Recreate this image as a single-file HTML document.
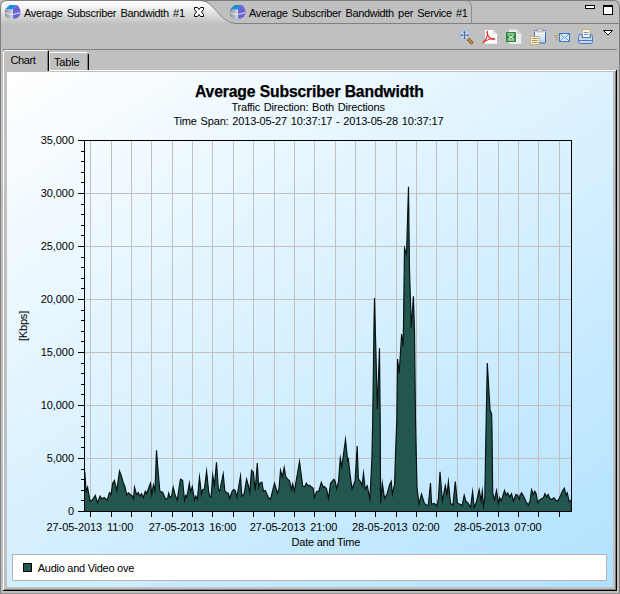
<!DOCTYPE html>
<html><head><meta charset="utf-8"><title>Average Subscriber Bandwidth</title>
<style>
html,body{margin:0;padding:0}
body{width:620px;height:594px;overflow:hidden;background:#c0c0c0;font-family:"Liberation Sans",sans-serif;font-size:11px;color:#000;position:relative}
div{position:absolute;box-sizing:border-box;white-space:nowrap}
.abs{position:absolute;left:0;top:0}
.t{font-size:11px;line-height:14px;height:14px}
.content{left:7px;top:72px;width:606px;height:515px;background:linear-gradient(147deg,#ffffff 0%,#b1e2ff 100%)}
.yl{left:14px;width:60px;text-align:right;letter-spacing:-0.05px}
.xl{top:520px;letter-spacing:-0.06px;word-spacing:1.8px}
.tab{top:5.5px;letter-spacing:-0.33px;word-spacing:1.6px}
</style></head><body>
<!-- outer frame + editor tabs -->
<svg class="abs" width="620" height="594" viewBox="0 0 620 594">
<defs><linearGradient id="tg" x1="0" y1="0" x2="0" y2="1"><stop offset="0" stop-color="#ffffff"/><stop offset="0.25" stop-color="#f4f4f4"/><stop offset="1" stop-color="#c0c0c0"/></linearGradient></defs>
<path d="M1 24V7Q1 1 7 1H199C207 1 210 4 214.5 9C218.5 12.5 225 23 236 23V24Z" fill="url(#tg)"/>
<path d="M0.5 594V7Q0.5 0.5 7 0.5H199C207 0.5 210 4 214.5 9C218.5 12.5 225 23 236 23.5H619" fill="none" stroke="#808080" stroke-width="1"/>
<path d="M199 0.5H613Q619.5 0.5 619.5 7V594" fill="none" stroke="#7c7c7c" stroke-width="1"/>
<path d="M465 0.5Q471.5 1 471.5 7V23" fill="none" stroke="#8c8c8c" stroke-width="1"/>
</svg>
<div class="t tab" style="left:24px">Average Subscriber Bandwidth #1</div>
<div class="t tab" style="left:249px">Average Subscriber Bandwidth per Service #1</div>
<svg class="abs" width="620" height="50" viewBox="0 0 620 50">
<defs>
<linearGradient id="ig1" x1="0" y1="0" x2="1" y2="0"><stop offset="0" stop-color="#8890a0"/><stop offset="1" stop-color="#d8dce0"/></linearGradient>
<linearGradient id="ig2" x1="0" y1="0" x2="0" y2="1"><stop offset="0" stop-color="#ffffff"/><stop offset="1" stop-color="#b8d0f0"/></linearGradient>
</defs>
<!-- tab icons (3D pie) -->
<g>
<path d="M5 9.5L9.5 5H17L13 9.5Z" fill="#1a8cd8"/>
<path d="M5 9.5H13V18.5H8Q5 17 5 15Z" fill="url(#ig1)"/>
<path d="M13 9.5L17 5Q20.5 8 20.5 12.5Q20 17 16 18.5H13Z" fill="#6a62d6"/>
<path d="M5.5 13Q12 16 20 12.5" stroke="#e8e8f4" stroke-width="1" fill="none"/>
</g>
<g transform="translate(225,0)">
<path d="M5 9.5L9.5 5H17L13 9.5Z" fill="#1a8cd8"/>
<path d="M5 9.5H13V18.5H8Q5 17 5 15Z" fill="url(#ig1)"/>
<path d="M13 9.5L17 5Q20.5 8 20.5 12.5Q20 17 16 18.5H13Z" fill="#6a62d6"/>
<path d="M5.5 13Q12 16 20 12.5" stroke="#e8e8f4" stroke-width="1" fill="none"/>
</g>
<!-- close X -->
<path d="M194.5 7.5H197.5L199 9.5L200.500 7.5H203.5V9.5L201.500 12L203.5 14.500V16.500H200.500L199 14.500L197.500 16.500H194.500V14.500L196.500 12L194.500 9.500Z" fill="#fff" stroke="#000" stroke-width="1"/>
<!-- min / max -->
<rect x="585.5" y="5.500" width="9" height="3" fill="#fff" stroke="#000"/>
<rect x="603.500" y="6" width="9" height="8.500" fill="#fff" stroke="#000"/><rect x="603" y="5" width="10" height="2" fill="#000"/>
<!-- dropdown -->
<path d="M603.500 30.500H612.500L608 35Z" fill="#fff" stroke="#000" stroke-width="1"/>
<!-- zoom icon -->
<path d="M468.300 39.300L471.500 42.500" stroke="#8a5420" stroke-width="3.400" stroke-linecap="round"/>
<path d="M468.300 39.300L471.500 42.500" stroke="#c88838" stroke-width="2" stroke-linecap="round"/>
<circle cx="464.500" cy="35.200" r="4.600" fill="#cfe0f8" stroke="#9cbce8" stroke-width="1"/>
<path d="M464.500 31.500V39M460.800 35.200H468.200" stroke="#5a6a84" stroke-width="1"/>
<path d="M463.300 32.800L464.500 31.500L465.700 32.800M463.300 37.700L464.500 39L465.700 37.700M462.100 34L460.800 35.200L462.100 36.400M466.900 34L468.200 35.200L466.900 36.400" stroke="#5a6a84" stroke-width="0.900" fill="none"/>
<!-- pdf -->
<path d="M485 30H493L497 34V43.700H485Z" fill="#fdfdfd"/>
<path d="M493 30V34H497Z" fill="#dcdcdc"/>
<path d="M487.200 31.200C486.800 33.500 488.200 36.500 490 38C491.500 39.200 493.500 39.600 494.800 39C493 37.900 488 38.800 482.800 42.600C485.500 40.500 488.400 36 487.200 31.200Z" fill="none" stroke="#e02828" stroke-width="1.150" stroke-linejoin="round"/>
<!-- excel -->
<path d="M509 29.500H517L521.300 34V44H509Z" fill="#ececec"/>
<path d="M517 29.500V34H521.300Z" fill="#d4d4d4"/>
<rect x="506" y="32" width="10" height="10" fill="#2e8b3c"/>
<rect x="507.500" y="33.500" width="7" height="1" fill="#e8f4e8"/><rect x="507.500" y="39.500" width="7" height="1" fill="#e8f4e8"/>
<path d="M508.500 35.500L513.500 39M513.500 35.500L508.500 39" stroke="#d8ecd8" stroke-width="1.200"/>
<!-- clipboard -->
<rect x="534.500" y="30.500" width="11" height="12.500" rx="1" fill="url(#ig2)" stroke="#3c6cb8"/>
<rect x="537" y="29" width="6" height="3" fill="#d8d8d8" stroke="#909090" stroke-width="0.600"/>
<rect x="530.500" y="36.500" width="8.500" height="8" fill="#f8f5e4" stroke="#c4b070"/>
<path d="M532 38.500H537.500M532 40.500H537.500M532 42.500H537.500" stroke="#a48c5c" stroke-width="1"/>
<!-- mail -->
<rect x="559.500" y="33.500" width="10" height="8" fill="#d8e8fa" stroke="#3c78c8"/>
<path d="M560 34L564.500 38L569 34M560 41L563.500 37.500M569 41L565.500 37.500" stroke="#5c90d4" stroke-width="0.900" fill="none"/>
<path d="M554 35.500H558M555 37.500H558M556 39.500H558" stroke="#d09c3c" stroke-width="1"/>
<!-- printer -->
<rect x="582.500" y="29.500" width="7.500" height="8" fill="#faf8ec" stroke="#c8b070"/>
<path d="M584 32.500H588.500M584 34.500H588.500" stroke="#6088c8" stroke-width="0.900"/>
<path d="M578.500 36.500Q578.500 34.500 580.500 34.500H582V37.500H590.500V34.500H591Q592.500 34.500 592.500 36.500V41.500Q592.500 43.500 590.500 43.500H580.500Q578.500 43.500 578.500 41.500Z" fill="#c4d8f4" stroke="#4878c0"/>
<path d="M579 40.500H592" stroke="#4878c0" stroke-width="1"/>
</svg>

<!-- inner folder -->
<div style="left:3px;top:49px;width:614px;height:1px;background:#808080"></div>
<div style="left:5px;top:50px;width:42px;height:1px;background:#fff"></div>
<div style="left:4px;top:51px;width:1px;height:1px;background:#fff"></div>
<div style="left:3px;top:52px;width:1px;height:538px;background:#fff"></div>
<div style="left:48px;top:51px;width:1px;height:20px;background:#000"></div>
<div style="left:47px;top:52px;width:1px;height:19px;background:#808080"></div>
<div style="left:49px;top:52px;width:38px;height:1px;background:#fff"></div>
<div style="left:49px;top:53px;width:1px;height:17px;background:#e0e0e0"></div>
<div style="left:88px;top:54px;width:1px;height:16px;background:#000"></div>
<div style="left:87px;top:54px;width:1px;height:16px;background:#808080"></div>
<div style="left:49px;top:70px;width:567px;height:1px;background:#fff"></div>
<div style="left:615px;top:71px;width:1px;height:519px;background:#808080"></div>
<div style="left:616px;top:70px;width:1px;height:521px;background:#000"></div>
<div style="left:4px;top:589px;width:612px;height:1px;background:#808080"></div>
<div style="left:3px;top:590px;width:614px;height:1px;background:#000"></div>
<div style="left:0px;top:593px;width:620px;height:1px;background:#909090"></div>
<div class="t" style="left:10.5px;top:53px;letter-spacing:-0.4px">Chart</div>
<div class="t" style="left:54px;top:55px;letter-spacing:-0.2px">Table</div>
<div class="content"></div>
<svg class="abs" width="620" height="594" viewBox="0 0 620 594">
<path d="M90.5 140V511M111.5 140V511M131.5 140V511M151.5 140V511M172.5 140V511M192.5 140V511M212.5 140V511M233.5 140V511M253.5 140V511M274.5 140V511M294.5 140V511M314.5 140V511M335.5 140V511M355.5 140V511M375.5 140V511M396.5 140V511M416.5 140V511M436.5 140V511M457.5 140V511M477.5 140V511M498.5 140V511M518.5 140V511M538.5 140V511M559.5 140V511M84 458.5H571M84 405.5H571M84 352.5H571M84 299.5H571M84 246.5H571M84 193.5H571" stroke="#c0c0c0" stroke-width="1" fill="none" shape-rendering="crispEdges"/>
<polygon points="84.8,511 84.8,471.9 86.1,491.3 87.6,487.3 90.0,501.0 92.1,500.2 95.3,495.3 97.4,502.6 100.2,496.1 101.8,499.0 104.2,497.4 107.1,500.2 109.5,492.6 111.0,494.5 112.7,483.2 114.4,480.5 116.8,490.5 119.5,471.1 121.1,475.2 123.2,482.4 124.8,486.5 126.8,495.0 128.4,492.9 132.4,496.1 133.5,498.5 134.5,487.3 136.5,494.5 138.4,492.6 139.7,496.1 141.6,493.7 143.2,497.7 145.3,491.3 146.5,493.7 150.5,483.2 151.8,494.5 153.4,484.8 155.0,490.5 156.5,450.2 157.9,468.7 159.8,490.5 161.1,492.1 162.6,492.1 165.5,499.0 167.6,498.5 168.7,493.2 170.0,497.7 171.6,496.1 173.2,487.3 175.2,495.3 177.3,500.2 178.9,488.9 180.5,479.2 182.6,480.3 184.5,500.2 185.8,495.3 186.9,496.9 189.4,483.2 190.6,492.1 192.3,486.8 194.5,500.2 195.8,496.1 197.4,499.0 199.5,477.1 201.5,494.5 202.7,489.7 204.4,488.9 206.6,471.1 208.7,492.1 210.0,496.9 211.1,496.9 212.7,475.2 214.4,485.6 216.5,462.3 218.4,489.7 219.7,491.0 223.2,473.9 224.8,490.5 226.8,492.9 228.4,493.2 229.7,498.5 232.1,491.3 233.7,489.4 235.3,490.5 236.9,497.4 240.5,476.0 241.8,496.1 244.2,493.7 246.6,479.2 248.2,484.8 249.8,492.1 251.5,470.3 253.4,472.3 255.2,490.5 257.3,463.1 258.7,487.3 260.0,483.2 261.9,482.1 263.5,491.3 265.3,490.5 268.4,497.4 270.5,499.4 274.5,483.2 277.4,492.9 279.0,488.9 280.5,470.3 282.3,476.8 284.2,467.4 285.8,476.8 287.7,479.2 289.5,480.8 291.5,489.7 292.7,484.0 294.4,491.3 299.5,461.5 302.7,486.1 304.7,486.8 306.3,483.2 307.9,485.6 309.5,485.3 313.2,488.4 314.5,497.4 316.5,491.8 318.9,491.0 321.3,482.4 323.2,487.3 324.5,486.5 326.6,488.9 328.5,498.5 330.5,483.2 333.9,479.2 335.3,481.6 336.6,488.9 338.5,481.6 340.3,458.2 341.8,466.8 345.5,439.4 347.6,460.6 348.4,459.0 350.0,473.9 352.0,489.0 355.1,480.6 357.2,446.1 358.4,478.9 360.9,482.3 362.1,485.7 363.5,473.0 365.2,489.0 367.2,485.7 369.9,499.1 371.9,458.7 372.7,420 373.9,330 374.5,298 377.4,409 379.5,348.2 380.2,420 380.6,503.3 382.3,483.1 384.5,498.3 387.0,494.1 389.6,484.8 391.2,481.4 392.4,494.1 394.6,484.0 395.5,453.7 396.8,420 397.6,359 399.2,373.5 401.6,334 403.2,346 404.5,248.2 406.5,254.2 408.5,186.8 409.5,270 411.3,327.4 413.4,296.3 414.5,330 415.5,420 417.0,487.3 419.0,504.2 421.5,494.1 424.1,502.5 425.8,505.0 428.3,505.0 430.5,483.1 431.6,504.2 434.2,503.3 436.7,505.9 438.4,499.1 440.0,471.9 442.4,501.0 445.3,485.6 446.9,494.5 448.4,481.6 450.5,503.4 452.9,505.0 455.3,481.6 457.4,503.4 460.2,504.2 462.1,505.8 464.2,495.3 465.8,501.0 468.2,503.4 470.6,507.4 472.6,491.6 474.2,507.4 476.3,502.6 479.2,489.7 481.1,501.0 482.3,491.3 483.5,506.6 484.8,497.7 486.0,430.0 487.3,363.1 490,409.4 491.6,414.2 492,430 492.7,492.9 494.5,500.2 496.5,490.5 498.4,503.4 499.7,497.7 501.3,501.0 504.5,490.5 506.1,495.3 507.7,492.9 509.7,496.9 511.5,493.7 513.4,501.0 515.8,494.5 517.4,495.3 519.4,499.4 520.0,495.3 521.6,492.9 524.0,496.9 526.1,501.8 528.4,505.0 530.0,501.0 531.6,489.7 533.2,494.5 534.8,491.3 536.1,493.7 537.7,502.6 539.4,500.2 541.8,498.5 543.4,497.7 545.0,493.7 546.6,496.9 548.2,494.5 549.8,498.5 551.5,499.4 553.9,497.7 555.8,500.2 557.9,501.0 560.3,496.1 562.3,491.3 564.4,488.1 566.0,495.3 567.3,492.9 569.2,501.8 570.8,500.2 571.6,501.0 571.6,511" fill="#22564f"/>
<polyline points="84.8,471.9 86.1,491.3 87.6,487.3 90.0,501.0 92.1,500.2 95.3,495.3 97.4,502.6 100.2,496.1 101.8,499.0 104.2,497.4 107.1,500.2 109.5,492.6 111.0,494.5 112.7,483.2 114.4,480.5 116.8,490.5 119.5,471.1 121.1,475.2 123.2,482.4 124.8,486.5 126.8,495.0 128.4,492.9 132.4,496.1 133.5,498.5 134.5,487.3 136.5,494.5 138.4,492.6 139.7,496.1 141.6,493.7 143.2,497.7 145.3,491.3 146.5,493.7 150.5,483.2 151.8,494.5 153.4,484.8 155.0,490.5 156.5,450.2 157.9,468.7 159.8,490.5 161.1,492.1 162.6,492.1 165.5,499.0 167.6,498.5 168.7,493.2 170.0,497.7 171.6,496.1 173.2,487.3 175.2,495.3 177.3,500.2 178.9,488.9 180.5,479.2 182.6,480.3 184.5,500.2 185.8,495.3 186.9,496.9 189.4,483.2 190.6,492.1 192.3,486.8 194.5,500.2 195.8,496.1 197.4,499.0 199.5,477.1 201.5,494.5 202.7,489.7 204.4,488.9 206.6,471.1 208.7,492.1 210.0,496.9 211.1,496.9 212.7,475.2 214.4,485.6 216.5,462.3 218.4,489.7 219.7,491.0 223.2,473.9 224.8,490.5 226.8,492.9 228.4,493.2 229.7,498.5 232.1,491.3 233.7,489.4 235.3,490.5 236.9,497.4 240.5,476.0 241.8,496.1 244.2,493.7 246.6,479.2 248.2,484.8 249.8,492.1 251.5,470.3 253.4,472.3 255.2,490.5 257.3,463.1 258.7,487.3 260.0,483.2 261.9,482.1 263.5,491.3 265.3,490.5 268.4,497.4 270.5,499.4 274.5,483.2 277.4,492.9 279.0,488.9 280.5,470.3 282.3,476.8 284.2,467.4 285.8,476.8 287.7,479.2 289.5,480.8 291.5,489.7 292.7,484.0 294.4,491.3 299.5,461.5 302.7,486.1 304.7,486.8 306.3,483.2 307.9,485.6 309.5,485.3 313.2,488.4 314.5,497.4 316.5,491.8 318.9,491.0 321.3,482.4 323.2,487.3 324.5,486.5 326.6,488.9 328.5,498.5 330.5,483.2 333.9,479.2 335.3,481.6 336.6,488.9 338.5,481.6 340.3,458.2 341.8,466.8 345.5,439.4 347.6,460.6 348.4,459.0 350.0,473.9 352.0,489.0 355.1,480.6 357.2,446.1 358.4,478.9 360.9,482.3 362.1,485.7 363.5,473.0 365.2,489.0 367.2,485.7 369.9,499.1 371.9,458.7 372.7,420 373.9,330 374.5,298 377.4,409 379.5,348.2 380.2,420 380.6,503.3 382.3,483.1 384.5,498.3 387.0,494.1 389.6,484.8 391.2,481.4 392.4,494.1 394.6,484.0 395.5,453.7 396.8,420 397.6,359 399.2,373.5 401.6,334 403.2,346 404.5,248.2 406.5,254.2 408.5,186.8 409.5,270 411.3,327.4 413.4,296.3 414.5,330 415.5,420 417.0,487.3 419.0,504.2 421.5,494.1 424.1,502.5 425.8,505.0 428.3,505.0 430.5,483.1 431.6,504.2 434.2,503.3 436.7,505.9 438.4,499.1 440.0,471.9 442.4,501.0 445.3,485.6 446.9,494.5 448.4,481.6 450.5,503.4 452.9,505.0 455.3,481.6 457.4,503.4 460.2,504.2 462.1,505.8 464.2,495.3 465.8,501.0 468.2,503.4 470.6,507.4 472.6,491.6 474.2,507.4 476.3,502.6 479.2,489.7 481.1,501.0 482.3,491.3 483.5,506.6 484.8,497.7 486.0,430.0 487.3,363.1 490,409.4 491.6,414.2 492,430 492.7,492.9 494.5,500.2 496.5,490.5 498.4,503.4 499.7,497.7 501.3,501.0 504.5,490.5 506.1,495.3 507.7,492.9 509.7,496.9 511.5,493.7 513.4,501.0 515.8,494.5 517.4,495.3 519.4,499.4 520.0,495.3 521.6,492.9 524.0,496.9 526.1,501.8 528.4,505.0 530.0,501.0 531.6,489.7 533.2,494.5 534.8,491.3 536.1,493.7 537.7,502.6 539.4,500.2 541.8,498.5 543.4,497.7 545.0,493.7 546.6,496.9 548.2,494.5 549.8,498.5 551.5,499.4 553.9,497.7 555.8,500.2 557.9,501.0 560.3,496.1 562.3,491.3 564.4,488.1 566.0,495.3 567.3,492.9 569.2,501.8 570.8,500.2 571.6,501.0" fill="none" stroke="#061010" stroke-width="1.15" stroke-linejoin="miter" stroke-miterlimit="10"/>
<path d="M84.5 140V512M84 511.5H572M571.5 140V511M84 140.5H571M78 511.5H84M81 500.5H84M81 490.5H84M81 479.5H84M81 469.5H84M78 458.5H84M81 447.5H84M81 437.5H84M81 426.5H84M81 416.5H84M78 405.5H84M81 394.5H84M81 384.5H84M81 373.5H84M81 363.5H84M78 352.5H84M81 341.5H84M81 331.5H84M81 320.5H84M81 310.5H84M78 299.5H84M81 288.5H84M81 278.5H84M81 267.5H84M81 257.5H84M78 246.5H84M81 235.5H84M81 225.5H84M81 214.5H84M81 204.5H84M78 193.5H84M81 182.5H84M81 172.5H84M81 161.5H84M81 151.5H84M78 140.5H84M90.5 512V517M111.5 512V517M131.5 512V517M151.5 512V517M172.5 512V517M192.5 512V517M212.5 512V517M233.5 512V517M253.5 512V517M274.5 512V517M294.5 512V517M314.5 512V517M335.5 512V517M355.5 512V517M375.5 512V517M396.5 512V517M416.5 512V517M436.5 512V517M457.5 512V517M477.5 512V517M498.5 512V517M518.5 512V517M538.5 512V517M559.5 512V517" stroke="#000" stroke-width="1" fill="none" shape-rendering="crispEdges"/>
</svg>
<div style="left:0;width:620px;text-align:center;top:82.66px;left:-0.7px;font-size:15.7px;font-weight:bold;line-height:18px;letter-spacing:-0.12px;-webkit-text-stroke:0.25px #000">Average Subscriber Bandwidth</div>
<div class="t" style="left:231.4px;top:100px;letter-spacing:-0.2px;word-spacing:1px">Traffic Direction: Both Directions</div>
<div class="t" style="left:173.4px;top:114px;letter-spacing:-0.15px;word-spacing:0.8px">Time Span: 2013-05-27 10:37:17 - 2013-05-28 10:37:17</div>
<div class="yl t" style="top:504px">0</div><div class="yl t" style="top:451px">5,000</div><div class="yl t" style="top:398px">10,000</div><div class="yl t" style="top:345px">15,000</div><div class="yl t" style="top:292px">20,000</div><div class="yl t" style="top:239px">25,000</div><div class="yl t" style="top:186px">30,000</div><div class="yl t" style="top:133px">35,000</div>
<div class="xl t" style="left:46.5px">27-05-2013 11:00</div><div class="xl t" style="left:148.7px">27-05-2013 16:00</div><div class="xl t" style="left:249.7px">27-05-2013 21:00</div><div class="xl t" style="left:351.9px">28-05-2013 02:00</div><div class="xl t" style="left:453.9px">28-05-2013 07:00</div>
<div class="t" style="top:535px;left:291.6px;letter-spacing:-0.24px">Date and Time</div>
<div class="t" style="left:-7px;top:319px;width:60px;text-align:center;transform:rotate(-90deg);letter-spacing:-0.2px">[Kbps]</div>
<!-- legend -->
<div style="left:12px;top:554px;width:595px;height:27px;background:#fff;border:1px solid #b4b4b4"></div>
<div style="left:23px;top:563px;width:9px;height:9px;background:#22564f;border:1px solid #000"></div>
<div class="t" style="left:37.8px;top:561px;letter-spacing:-0.27px">Audio and Video ove</div>
</body></html>
